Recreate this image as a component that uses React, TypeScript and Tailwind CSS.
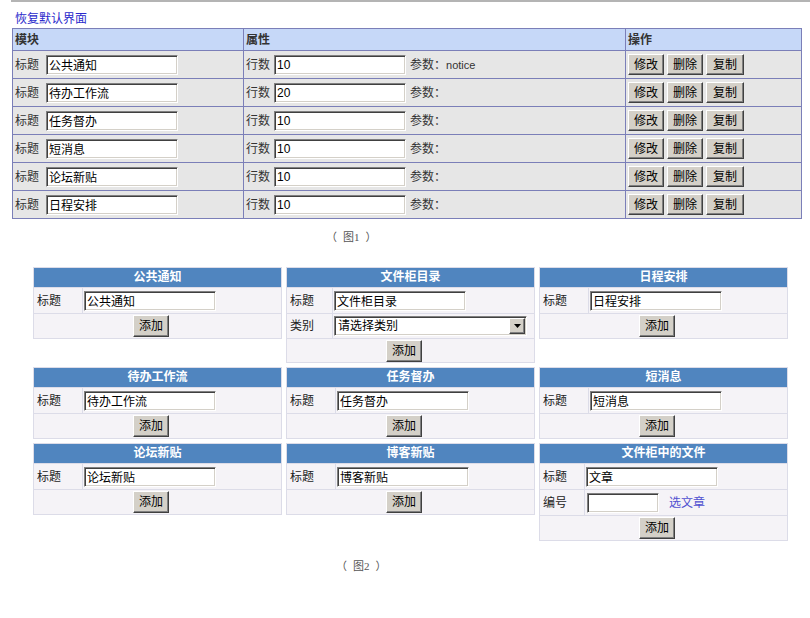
import React from 'react';

const tableRows = [
  { title: '公共通知', count: '10', param: 'notice' },
  { title: '待办工作流', count: '20', param: '' },
  { title: '任务督办', count: '10', param: '' },
  { title: '短消息', count: '10', param: '' },
  { title: '论坛新贴', count: '10', param: '' },
  { title: '日程安排', count: '10', param: '' },
];

function OldButton({ label, className = '' }: { label: string; className?: string }) {
  return (
    <button
      type="button"
      className={
        'flex items-center justify-center bg-[#d4d0c8] text-[12px] leading-[14px] text-black border border-t-white border-l-white border-r-[#404040] border-b-[#404040] shadow-[inset_-1px_-1px_0_#808080] ' +
        className
      }
    >
      {label}
    </button>
  );
}

function OldInput({ value, className = '' }: { value: string; className?: string }) {
  return (
    <input
      readOnly
      value={value}
      className={
        'h-[20px] bg-white px-[2px] text-[12px] leading-[14px] text-black outline-none border border-t-[#808080] border-l-[#808080] border-r-white border-b-white shadow-[inset_1px_1px_0_#404040,inset_-1px_-1px_0_#d4d0c8] ' +
        className
      }
    />
  );
}

function OldSelect({ text }: { text: string }) {
  return (
    <div className="flex h-[20px] w-[193px] items-center justify-between bg-white pl-[3px] pr-px border border-t-[#808080] border-l-[#808080] border-r-white border-b-white shadow-[inset_1px_1px_0_#404040,inset_-1px_-1px_0_#d4d0c8]">
      <span>{text}</span>
      <span className="flex h-[16px] w-[16px] items-center justify-center bg-[#d4d0c8] border border-t-white border-l-white border-r-[#404040] border-b-[#404040] shadow-[inset_-1px_-1px_0_#808080]">
        <svg width="7" height="4" viewBox="0 0 7 4">
          <polygon points="0,0 7,0 3.5,4" fill="#000" />
        </svg>
      </span>
    </div>
  );
}

type Field =
  | { kind: 'input'; label: string; value: string }
  | { kind: 'select'; label: string; value: string }
  | { kind: 'code'; label: string };

function Panel({
  title,
  fields,
  labelW = 'w-[48px]',
}: {
  title: string;
  fields: Field[];
  labelW?: string;
}) {
  return (
    <div className="flex flex-col gap-px bg-[#dcdce8] p-px">
      <div className="h-[19px] bg-[#5085bf] text-center font-bold leading-[19px] text-white">{title}</div>
      {fields.map((f, i) => (
        <div key={i} className={'flex gap-px ' + (f.kind === 'select' ? 'h-[24px]' : 'h-[25px]')}>
          <div className={labelW + ' flex items-center bg-[#f5f3f7] pl-[3px] text-[#222]'}>{f.label}</div>
          <div className="flex flex-1 items-center bg-[#f5f3f7] pl-px">
            {f.kind === 'input' && <OldInput value={f.value} className="w-[132px]" />}
            {f.kind === 'select' && <OldSelect text={f.value} />}
            {f.kind === 'code' && (
              <>
                <OldInput value="" className="ml-px w-[72px]" />
                <span className="ml-[10px] text-[#5050d0]">选文章</span>
              </>
            )}
          </div>
        </div>
      ))}
      <div className={'flex items-center justify-center bg-[#f5f3f7] pr-[13px] ' + (fields.some((f) => f.kind === 'select') ? 'h-[23px]' : 'h-[24px]')}>
        <OldButton label="添加" className="h-[22px] w-[36px]" />
      </div>
    </div>
  );
}

function Caption({ n, className }: { n: string; className: string }) {
  return (
    <div className={'flex gap-[6px] font-[Liberation_Serif,Noto_Sans_CJK_SC,serif] text-[11px] text-[#555] ' + className}>
      <span>（</span>
      <span>图{n}</span>
      <span>）</span>
    </div>
  );
}

export default function App() {
  const cell = 'border-r border-b border-[#7b7fb8]';
  return (
    <div className="h-[618px] w-[810px] bg-white font-[Liberation_Sans,Noto_Sans_CJK_SC,sans-serif] text-[12px] leading-[14px] text-black">
      <div className="ml-[11px] h-[2px] bg-[#b4b4b4]" />

      <div className="h-[26px] pl-[15px] pt-[10px]">
        <span className="text-[#2a2acc]">恢复默认界面</span>
      </div>

      {/* figure 1 */}
      <div className="ml-[12px] w-[790px] border-l border-t border-[#7b7fb8]">
        <div className="flex h-[22px] bg-[#c6d8f8] font-bold text-[#333]">
          <div className={cell + ' flex w-[231px] items-center pl-[2px]'}>模块</div>
          <div className={cell + ' flex w-[382px] items-center pl-[2px]'}>属性</div>
          <div className={cell + ' flex w-[176px] items-center pl-[2px]'}>操作</div>
        </div>
        {tableRows.map((r) => (
          <div key={r.title} className="flex h-[28px] bg-[#e6e6e6]">
            <div className={cell + ' flex w-[231px] items-center pl-[2px] text-[#333]'}>
              <span>标题</span>
              <OldInput value={r.title} className="ml-[7px] w-[132px]" />
            </div>
            <div className={cell + ' flex w-[382px] items-center pl-[2px] text-[#333]'}>
              <span>行数</span>
              <OldInput value={r.count} className="ml-[4px] w-[132px]" />
              <span className="ml-[4px]">参数：</span>
              <span className="text-[11px]">{r.param}</span>
            </div>
            <div className={cell + ' flex w-[176px] items-center gap-[3px] pl-[2px]'}>
              <OldButton label="修改" className="h-[21px] w-[36px]" />
              <OldButton label="删除" className="h-[21px] w-[36px]" />
              <OldButton label="复制" className="h-[21px] w-[38px]" />
            </div>
          </div>
        ))}
      </div>

      <Caption n="1" className="pl-[326px] pt-[11px]" />

      {/* figure 2 */}
      <div className="ml-[33px] mt-[23px] grid grid-cols-[249px_249px_249px] items-start gap-1">
        <Panel title="公共通知" fields={[{ kind: 'input', label: '标题', value: '公共通知' }]} />
        <Panel
          title="文件柜目录"
          labelW="w-[45px]"
          fields={[
            { kind: 'input', label: '标题', value: '文件柜目录' },
            { kind: 'select', label: '类别', value: '请选择类别' },
          ]}
        />
        <Panel title="日程安排" fields={[{ kind: 'input', label: '标题', value: '日程安排' }]} />
        <Panel title="待办工作流" fields={[{ kind: 'input', label: '标题', value: '待办工作流' }]} />
        <Panel title="任务督办" fields={[{ kind: 'input', label: '标题', value: '任务督办' }]} />
        <Panel title="短消息" fields={[{ kind: 'input', label: '标题', value: '短消息' }]} />
        <Panel title="论坛新贴" fields={[{ kind: 'input', label: '标题', value: '论坛新贴' }]} />
        <Panel title="博客新贴" fields={[{ kind: 'input', label: '标题', value: '博客新贴' }]} />
        <Panel
          title="文件柜中的文件"
          labelW="w-[44px]"
          fields={[
            { kind: 'input', label: '标题', value: '文章' },
            { kind: 'code', label: '编号' },
          ]}
        />
      </div>

      <Caption n="2" className="pl-[336px] pt-[18px]" />
    </div>
  );
}
